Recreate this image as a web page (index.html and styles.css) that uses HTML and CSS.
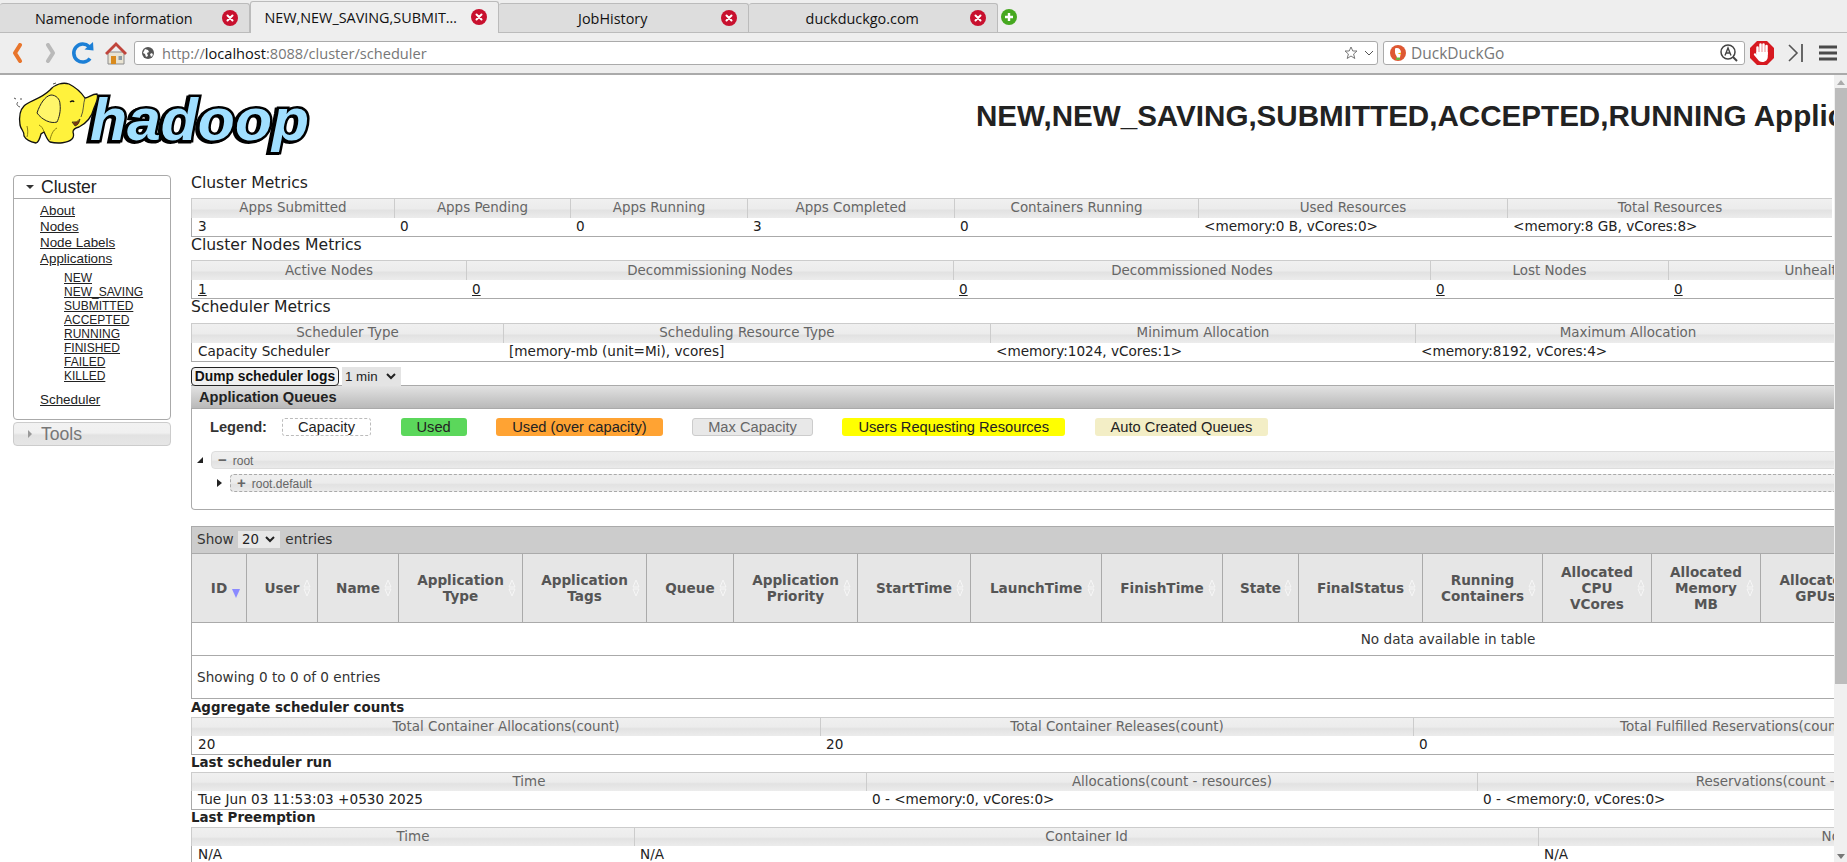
FILE: index.html
```html
<!DOCTYPE html>
<html>
<head>
  <title>NEW,NEW_SAVING,SUBMITTED,ACCEPTED,RUNNING Applications</title>
  <link rel="stylesheet" href="styles.css">
</head>
<body>
  <svg class="defs" width="0" height="0">
    <symbol id="close" viewBox="0 0 16 16">
      <circle cx="8" cy="8" r="8" fill="#c8102e"/>
      <path d="M5.5 5.5l5 5M10.5 5.5l-5 5" stroke="#fff" stroke-width="2" stroke-linecap="round"/>
    </symbol>
  </svg>

  <div class="tabstrip">
    <div class="tab"><span class="tab-label">Namenode information</span><svg class="tab-close"><use href="#close"/></svg></div>
    <div class="tab active"><span class="tab-label">NEW,NEW_SAVING,SUBMIT…</span><svg class="tab-close"><use href="#close"/></svg></div>
    <div class="tab"><span class="tab-label">JobHistory</span><svg class="tab-close"><use href="#close"/></svg></div>
    <div class="tab"><span class="tab-label">duckduckgo.com</span><svg class="tab-close"><use href="#close"/></svg></div>
    <svg class="tab-new" viewBox="0 0 16 16">
      <circle cx="8" cy="8" r="8" fill="#46a820"/>
      <path d="M8 4v8M4 8h8" stroke="#fff" stroke-width="2.4"/>
    </svg>
  </div>

  <div class="toolbar">
    <svg class="tb-back" viewBox="0 0 14 20"><path d="M10 2L5 10l5 8" fill="none" stroke="#e8752c" stroke-width="4" stroke-linejoin="round" stroke-linecap="round"/></svg>
    <svg class="tb-forward" viewBox="0 0 14 20"><path d="M4 2l5 8-5 8" fill="none" stroke="#b9b9b9" stroke-width="4" stroke-linejoin="round" stroke-linecap="round"/></svg>
    <svg class="tb-reload" viewBox="0 0 24 24">
      <path d="M19 17.500A9 9 0 1 1 18 5.500" fill="none" stroke="#1c7fd6" stroke-width="3.600"/>
      <path d="M13.500 8.500L22.500 9.500 22 1z" fill="#1c7fd6"/>
    </svg>
    <svg class="tb-home" viewBox="0 0 24 24">
      <path d="M4 11h16v12H4z" fill="#e9e3d2" stroke="#8c8c8c"/>
      <path d="M1 12L12 1l11 11-2 2-9-9-9 9z" fill="#c0453c"/>
      <path d="M7 15h5v8H7z" fill="#d98a1c"/>
      <path d="M14.500 15H18v4h-3.500z" fill="#8a9aa5"/>
    </svg>
    <div class="urlbar">
      <svg class="globe" viewBox="0 0 12 12">
        <circle cx="6" cy="6" r="6" fill="#555"/>
        <path d="M3 2l3 1 1 2-2 1 1 3-2 1-1-3-2-1zM8 7l2-1 1 2-2 2z" fill="#fff"/>
      </svg>
      <span class="url"><span class="url-dim">http://</span>localhost<span class="url-dim">:8088/cluster/scheduler</span></span>
      <svg class="star" viewBox="0 0 14 14"><path d="M7 1l1.800 4H13L9.600 8l1.200 4.500L7 10l-3.800 2.500L4.400 8 1 5h4.200z" fill="none" stroke="#777"/></svg>
      <svg class="chev" viewBox="0 0 10 6"><path d="M1 1l4 4 4-4" fill="none" stroke="#555"/></svg>
    </div>
    <div class="searchbar">
      <svg class="ddg" viewBox="0 0 16 16">
        <circle cx="8" cy="8" r="8" fill="#de5833"/>
        <path d="M5 3.500c3-1.500 6 .5 6 4 0 2-1 3-1 5.500H7c0-2.500-2-3-2-5.500z" fill="#fff"/>
        <path d="M7.500 8.500l3.500-1v2z" fill="#f5b400"/>
        <path d="M6 12.500h4V15H6z" fill="#6db33f"/>
      </svg>
      <span class="search-text">DuckDuckGo</span>
      <svg class="search-a" viewBox="0 0 18 18">
        <circle cx="8" cy="8" r="7" fill="none" stroke="#444" stroke-width="1.500"/>
        <path d="M5 11.500L8 4l3 7.500M6 9h4" fill="none" stroke="#444" stroke-width="1.400"/>
        <path d="M13 13l4 4" stroke="#444" stroke-width="2"/>
      </svg>
    </div>
    <svg class="tb-abp" viewBox="0 0 24 24">
      <path d="M7 0h10l7 7v10l-7 7H7l-7-7V7z" fill="#d71920"/>
      <path d="M7.500 13V6.500M10.500 12V3.500M13.500 12V3.500M16.500 13V5" fill="none" stroke="#fff" stroke-width="2.500" stroke-linecap="round"/>
      <path d="M6.300 11h11.500v4.500c0 3-2 5.500-5.500 5.500-2.500 0-3.500-1-4.500-2.500L4 14c-.7-1.200.8-2.200 1.600-1.400L7 14z" fill="#fff"/>
    </svg>
    <svg class="tb-next" viewBox="0 0 15 20"><path d="M1 2l8 8-8 8" fill="none" stroke="#555" stroke-width="1.600"/><path d="M14 1v18" stroke="#444" stroke-width="1.600"/></svg>
    <svg class="tb-menu" viewBox="0 0 18 16"><path d="M0 2h18M0 8h18M0 14h18" stroke="#4a4a4a" stroke-width="3"/></svg>
  </div>

  <div class="viewport">
    <div class="page">
      <div class="masthead">
        <svg class="logo" viewBox="0 0 300 75">
          <text class="logo-word" x="77" y="60" textLength="219" lengthAdjust="spacingAndGlyphs">hadoop</text>
          <path d="M37 10C42 4 50 2 56 4C62 7 68 12 72 18C75 18 79 14 84 14C86 18 83 23 81 28C79 36 74 43 66 47C62 48 60 50 60 52C61 55 60 58 59 59C55 63 45 64 37 62C34 60 33 56 31 52L28 54C27 58 26 62 23 63C18 62 13 60 11 56C12 52 8 50 7 45C6 38 7 30 11 26C16 21 28 19 37 10Z" fill="#fff23c" stroke="#111" stroke-width="1.300"/>
          <path d="M24 33C27 24 32 16 38 15C43 15 47 19 47 24C48 31 46 38 44 42C38 44 29 40 24 33Z" fill="#fff66a" stroke="#222" stroke-width="1"/>
          <path d="M7 27C4 26 3 24 5 22M3 19l-2-1M8 20l0-2M40 4l3-1" fill="none" stroke="#555" stroke-width="1"/>
          <path d="M57 22q3-2 4 0" fill="none" stroke="#111" stroke-width="1.400"/>
          <path d="M59 42q5 1 8-3-1 6-5 7z" fill="#7b3b12" stroke="#111" stroke-width=".6"/>
          <path d="M72 18C70 24 71 30 68 37" fill="none" stroke="#333" stroke-width=".8"/>
          <path d="M31 52C30 48 28 46 26 45M44 48C40 50 38 55 37 60M14 46C15 50 15 54 14 57" fill="none" stroke="#8a7f10" stroke-width="1"/>
        </svg>
        <h1 class="title">NEW,NEW_SAVING,SUBMITTED,ACCEPTED,RUNNING Applications</h1>
      </div>

      <div class="main">
        <div class="sidebar">
          <div class="nav-box">
            <div class="nav-head"><span class="tri-down"></span>Cluster</div>
            <ul class="nav-list">
              <li><a href="#">About</a></li>
              <li><a href="#">Nodes</a></li>
              <li><a href="#">Node Labels</a></li>
              <li><a href="#">Applications</a>
                <ul class="nav-sub">
                  <li><a href="#">NEW</a></li>
                  <li><a href="#">NEW_SAVING</a></li>
                  <li><a href="#">SUBMITTED</a></li>
                  <li><a href="#">ACCEPTED</a></li>
                  <li><a href="#">RUNNING</a></li>
                  <li><a href="#">FINISHED</a></li>
                  <li><a href="#">FAILED</a></li>
                  <li><a href="#">KILLED</a></li>
                </ul>
              </li>
              <li><a href="#">Scheduler</a></li>
            </ul>
          </div>
          <div class="nav-closed"><span class="tri-right"></span>Tools</div>
        </div>

        <div class="content">
          <div class="metrics-title">Cluster Metrics</div>
          <table class="info" width="1641">
            <colgroup><col width="203"><col width="176"><col width="177"><col width="207"><col width="244"><col width="309"><col width="325"></colgroup>
            <tr><th>Apps Submitted</th><th>Apps Pending</th><th>Apps Running</th><th>Apps Completed</th><th>Containers Running</th><th>Used Resources</th><th>Total Resources</th></tr>
            <tr><td>3</td><td>0</td><td>0</td><td>3</td><td>0</td><td>&lt;memory:0 B, vCores:0&gt;</td><td>&lt;memory:8 GB, vCores:8&gt;</td></tr>
          </table>

          <div class="metrics-title">Cluster Nodes Metrics</div>
          <table class="info" width="1824">
            <colgroup><col width="275"><col width="487"><col width="477"><col width="238"><col width="347"></colgroup>
            <tr><th>Active Nodes</th><th>Decommissioning Nodes</th><th>Decommissioned Nodes</th><th>Lost Nodes</th><th>Unhealthy Nodes</th></tr>
            <tr><td><a href="#">1</a></td><td><a href="#">0</a></td><td><a href="#">0</a></td><td><a href="#">0</a></td><td><a href="#">0</a></td></tr>
          </table>

          <div class="metrics-title">Scheduler Metrics</div>
          <table class="info" width="1649">
            <colgroup><col width="312"><col width="487"><col width="425"><col width="425"></colgroup>
            <tr><th>Scheduler Type</th><th>Scheduling Resource Type</th><th>Minimum Allocation</th><th>Maximum Allocation</th></tr>
            <tr><td>Capacity Scheduler</td><td>[memory-mb (unit=Mi), vcores]</td><td>&lt;memory:1024, vCores:1&gt;</td><td>&lt;memory:8192, vCores:4&gt;</td></tr>
          </table>

          <div class="log-row">
            <button class="log-btn">Dump scheduler logs</button>
            <select class="log-select"><option>1 min</option></select>
          </div>

          <div class="panel">
            <div class="panel-head">Application Queues</div>
            <div class="legend">
              <b class="legend-label">Legend:</b>
              <span class="chip chip-capacity">Capacity</span>
              <span class="chip chip-used">Used</span>
              <span class="chip chip-over">Used (over capacity)</span>
              <span class="chip chip-max">Max Capacity</span>
              <span class="chip chip-users">Users Requesting Resources</span>
              <span class="chip chip-auto">Auto Created Queues</span>
            </div>
            <div class="queue queue-root">
              <span class="q-open"></span>
              <div class="q-bar"><span class="q-sign">&minus;</span>root</div>
            </div>
            <div class="queue queue-child">
              <span class="q-closed"></span>
              <div class="q-bar q-dashed"><span class="q-sign">+</span>root.default</div>
            </div>
          </div>

          <div class="apps">
            <div class="apps-bar">Show <select class="apps-select"><option>20</option></select> entries</div>
            <table class="apps-table" width="2512">
              <colgroup><col width="55"><col width="71"><col width="81"><col width="124"><col width="124"><col width="87"><col width="124"><col width="113"><col width="131"><col width="121"><col width="76"><col width="124"><col width="120"><col width="109"><col width="109"><col width="110"><col width="104"><col width="104"><col width="104"><col width="104"><col width="104"><col width="104"><col width="105"><col width="105"></colgroup>
              <tr>
                <th class="sort-desc">ID</th><th>User</th><th>Name</th><th>Application Type</th><th>Application Tags</th><th>Queue</th><th>Application Priority</th><th>StartTime</th><th>LaunchTime</th><th>FinishTime</th><th>State</th><th>FinalStatus</th><th>Running Containers</th><th>Allocated CPU VCores</th><th>Allocated Memory MB</th><th>Allocated GPUs</th><th>Reserved CPU VCores</th><th>Reserved Memory MB</th><th>Reserved GPUs</th><th>% of Queue</th><th>% of Cluster</th><th>Progress</th><th>Tracking UI</th><th>Blacklisted Nodes</th>
              </tr>
              <tr><td class="empty" colspan="24">No data available in table</td></tr>
            </table>
            <div class="apps-foot">Showing 0 to 0 of 0 entries</div>
          </div>

          <div class="sub-title sub-first">Aggregate scheduler counts</div>
          <table class="info info-low" width="1862">
            <colgroup><col width="629"><col width="593"><col width="640"></colgroup>
            <tr><th>Total Container Allocations(count)</th><th>Total Container Releases(count)</th><th>Total Fulfilled Reservations(count)</th></tr>
            <tr><td>20</td><td>20</td><td>0</td></tr>
          </table>

          <div class="sub-title">Last scheduler run</div>
          <table class="info info-low" width="1936">
            <colgroup><col width="675"><col width="611"><col width="650"></colgroup>
            <tr><th>Time</th><th>Allocations(count - resources)</th><th>Reservations(count - resources)</th></tr>
            <tr><td>Tue Jun 03 11:53:03 +0530 2025</td><td>0 - &lt;memory:0, vCores:0&gt;</td><td>0 - &lt;memory:0, vCores:0&gt;</td></tr>
          </table>

          <div class="sub-title">Last Preemption</div>
          <table class="info info-low" width="1965">
            <colgroup><col width="443"><col width="904"><col width="618"></colgroup>
            <tr><th>Time</th><th>Container Id</th><th>Node Id</th></tr>
            <tr><td>N/A</td><td>N/A</td><td>N/A</td></tr>
          </table>
        </div>
      </div>
    </div>

    <div class="scrollbar">
      <span class="sb-up"></span>
      <div class="sb-thumb"></div>
      <span class="sb-down"></span>
    </div>
  </div>
</body>
</html>
```

FILE: styles.css
```css
* {
  box-sizing: border-box;
}

html, body {
  height: 100%;
}

body {
  margin: 0;
  display: flex;
  flex-direction: column;
  overflow: hidden;
  background-color: #fff;
  color: #222;
  font-family: "DejaVu Sans", sans-serif;
  font-size: 13.6px;
}

a {
  color: #222;
}

.defs {
  position: absolute;
}

/* browser chrome */
.tabstrip {
  display: flex;
  align-items: flex-end;
  height: 33px;
  flex: none;
  background-color: #eee;
  border-bottom: 1px solid #bbb;
  font-family: "Open Sans", sans-serif;
  font-size: 14.4px;
  color: #111;
}

.tab {
  display: flex;
  align-items: center;
  width: 249.500px;
  height: 29px;
  background-color: #ddd;
  border: 1px solid #bbb;
  border-bottom: none;
  border-left: none;
  border-radius: 3px 3px 0 0;
}

.tab.active {
  height: 32px;
  margin-bottom: -1px;
  padding-bottom: 1px;
  background-color: #eee;
  border-left: 1px solid #bbb;
}

.tab.active .tab-label {
  padding-left: 4px;
}

.tab-label {
  flex: 1;
  min-width: 0;
  padding-left: 10px;
  text-align: center;
  white-space: nowrap;
  overflow: hidden;
}

.tab-close {
  flex: none;
  width: 16px;
  height: 16px;
  margin: 0 11px 0 4px;
}

.tab-new {
  width: 16px;
  height: 16px;
  margin: 0 0 7px 3px;
}

.toolbar {
  display: flex;
  align-items: center;
  height: 42px;
  flex: none;
  padding: 0 10px 1px;
  background-color: #eee;
  border-bottom: 2px solid #aaa;
}

.tb-back, .tb-forward {
  width: 14px;
  height: 20px;
}

.tb-forward {
  margin-left: 20px;
}

.tb-reload, .tb-home {
  width: 24px;
  height: 24px;
}

.tb-reload {
  margin-left: 13px;
}

.tb-home {
  margin-left: 9px;
}

.urlbar, .searchbar {
  display: flex;
  align-items: center;
  height: 24px;
  background-color: #fff;
  border: 1px solid #aaa;
  border-radius: 3px;
  font-family: "Open Sans", sans-serif;
}

.urlbar {
  flex: 1;
  min-width: 0;
  margin-left: 6px;
  padding: 0 3px 0 7px;
  color: #111;
  font-size: 14.6px;
}

.globe {
  width: 12px;
  height: 12px;
  margin-right: 8px;
}

.url {
  flex: 1;
}

.url-dim {
  color: #777;
}

.star {
  width: 14px;
  height: 14px;
  margin-right: 6px;
}

.chev {
  width: 10px;
  height: 6px;
}

.searchbar {
  flex: none;
  width: 362px;
  margin-left: 5px;
  padding: 0 6px;
  color: #777;
  font-size: 15.5px;
}

.ddg {
  width: 16px;
  height: 16px;
  margin-right: 5px;
}

.search-text {
  flex: 1;
}

.search-a {
  width: 18px;
  height: 18px;
}

.tb-abp {
  width: 24px;
  height: 24px;
  margin-left: 5px;
}

.tb-next {
  width: 15px;
  height: 20px;
  margin-left: 14px;
}

.tb-menu {
  width: 18px;
  height: 16px;
  margin-left: 16px;
}

/* page */
.viewport {
  display: flex;
  flex: 1;
  min-height: 0;
}

.page {
  flex: 1;
  min-width: 0;
  overflow: hidden;
}

.masthead {
  display: flex;
  height: 99.700px;
  padding: 5px 0 0 13px;
}

.logo {
  flex: none;
  width: 300px;
  height: 75px;
}

.logo-word {
  font-family: "Liberation Sans", sans-serif;
  font-size: 60px;
  font-weight: bold;
  font-style: italic;
  fill: #a0dfff;
  stroke: #000;
  stroke-width: 5px;
  stroke-linejoin: miter;
  paint-order: stroke;
  filter: drop-shadow(-2px 1px 0 #000);
}

.title {
  flex: none;
  margin: 19px 0 0 663px;
  color: #222;
  font-family: "Liberation Sans", sans-serif;
  font-size: 29.6px;
  font-weight: bold;
  line-height: 34px;
  white-space: nowrap;
}

.main {
  display: flex;
}

.sidebar {
  flex: none;
  width: 158px;
  margin: 0 20px 0 13px;
  font-family: "Liberation Sans", sans-serif;
}

.nav-box {
  height: 245px;
  border: 1px solid #aaa;
  border-radius: 4px;
}

.nav-head, .nav-closed {
  display: flex;
  align-items: center;
  height: 23px;
  padding: 1px 0 0 12px;
  font-size: 17.6px;
}

.nav-head {
  border-bottom: 1px solid #aaa;
}

.tri-down {
  width: 0;
  height: 0;
  margin-right: 7px;
  border-top: 4px solid #333;
  border-left: 4px solid transparent;
  border-right: 4px solid transparent;
}

.tri-right {
  width: 0;
  height: 0;
  margin-right: 9px;
  margin-left: 2px;
  border-left: 4px solid #999;
  border-top: 4px solid transparent;
  border-bottom: 4px solid transparent;
}

.nav-closed {
  height: 24px;
  margin-top: 2px;
  border: 1px solid #ccc;
  border-radius: 4px;
  background: linear-gradient(#f2f2f2, #f0f0f0 45%, #e2e2e2 55%, #e6e6e6);
  color: #777;
}

.nav-list {
  margin: 4px 0 0;
  padding: 0 0 0 26px;
  list-style: none;
  font-size: 13.400px;
  line-height: 16px;
}

.nav-sub {
  margin: 4px 0 9px;
  padding: 0 0 0 24px;
  list-style: none;
  font-size: 12px;
  line-height: 14px;
}

.content {
  flex: 1;
  min-width: 0;
  overflow: hidden;
}

.metrics-title {
  height: 23.300px;
  font-size: 15.600px;
  line-height: 17px;
}

.info {
  border-collapse: separate;
  border-spacing: 0;
  table-layout: fixed;
}

.info th {
  height: 20px;
  padding: 0;
  background: linear-gradient(#f0f0f0, #ececec 50%, #e2e2e2 60%, #ececec);
  border-top: 1px solid #ccc;
  border-left: 1px solid #ccc;
  color: #666;
  font-size: 13.450px;
  font-weight: normal;
  line-height: 16px;
  white-space: nowrap;
}

.info td {
  height: 19px;
  padding: 0 0 0 6px;
  border-bottom: 1px solid #aaa;
  line-height: 15px;
  white-space: nowrap;
}

.info td:first-child {
  padding-left: 6px;
  border-left: 1px solid #aaa;
}

.log-row {
  display: flex;
  align-items: stretch;
  height: 19px;
  margin-top: 5px;
}

.log-btn {
  width: 148px;
  padding: 0;
  background-color: #f1f1f1;
  border: 1px solid #222;
  border-radius: 4px;
  color: #111;
  font-family: "Liberation Sans", sans-serif;
  font-size: 13.800px;
  font-weight: bold;
}

.log-select, .apps-select {
  appearance: none;
  border: none;
  border-radius: 0;
  background: #e4e4e4 url("data:image/svg+xml,%3Csvg xmlns='http://www.w3.org/2000/svg' width='10' height='7'%3E%3Cpath d='M1 1l4 4 4-4' fill='none' stroke='%23222' stroke-width='2'/%3E%3C/svg%3E") no-repeat right 5px center;
  color: #222;
}

.log-select {
  width: 59px;
  margin-left: 3px;
  padding: 0 0 0 3px;
  font-family: "Liberation Sans", sans-serif;
  font-size: 13.330px;
}

.panel {
  width: 1700px;
  height: 125px;
  margin-top: -1px;
  border: 1px solid #aaa;
  border-top: none;
  border-radius: 0 0 0 4px;
  font-family: "Liberation Sans", sans-serif;
}

.panel-head {
  height: 24px;
  margin-left: -1px;
  padding-left: 8px;
  background: linear-gradient(#e2e2e2, #b9b9b9);
  border-top: 1px solid #aaa;
  border-bottom: 1px solid #aaa;
  font-size: 14.670px;
  font-weight: bold;
  line-height: 22px;
}

.legend {
  display: flex;
  align-items: center;
  gap: 29.500px;
  height: 18px;
  margin: 9px 0 0 18px;
  font-size: 14.670px;
}

.legend-label {
  margin-right: -14.500px;
  color: #333;
}

.chip {
  height: 18px;
  padding: 0 15px;
  border: 1px solid transparent;
  border-radius: 3px;
  line-height: 16px;
  white-space: nowrap;
}

.chip-capacity {
  border: 1px dashed #bbb;
}

.chip-used {
  background-color: #5bd75b;
}

.chip-over {
  background-color: #ffa333;
}

.chip-max {
  background-color: #e8e8e8;
  border-color: #ccc;
  color: #666;
}

.chip-users {
  background-color: #ff0;
}

.chip-auto {
  background-color: #f3eec6;
}

.queue {
  display: flex;
  align-items: center;
  font-size: 12px;
  color: #666;
}

.queue-root {
  margin: 15px 0 0 5px;
}

.queue-child {
  margin: 5px 0 0 25px;
}

.q-open {
  width: 0;
  height: 0;
  margin-right: 8px;
  border-bottom: 6px solid #222;
  border-left: 6px solid transparent;
}

.q-closed {
  width: 0;
  height: 0;
  margin-right: 8px;
  border-left: 5px solid #222;
  border-top: 4px solid transparent;
  border-bottom: 4px solid transparent;
}

.q-bar {
  flex: 1;
  height: 18px;
  padding-left: 6px;
  background: linear-gradient(#efefef, #ececec 50%, #e2e2e2 60%, #eaeaea);
  border: 1px solid #ddd;
  border-radius: 4px;
  line-height: 15px;
}

.q-dashed {
  border: 1px dashed #aaa;
}

.q-sign {
  margin-right: 6px;
  font-size: 15px;
  font-weight: bold;
}

.apps {
  width: 1700px;
  margin-top: 16px;
}

.apps-bar {
  height: 28px;
  padding: 3px 0 0 5px;
  background-color: #ccc;
  border: 1px solid #aaa;
  border-bottom: 1px solid #aaa;
  line-height: 18px;
  color: #333;
}

.apps-select {
  width: 42px;
  height: 17px;
  margin: 1px 1px 0 0;
  padding-left: 4px;
  background-color: #e8e8e8;
  font-family: "DejaVu Sans", sans-serif;
  font-size: 13.330px;
  vertical-align: top;
}

.apps-table {
  border-collapse: separate;
  border-spacing: 0;
  table-layout: fixed;
}

.apps-table th {
  height: 69px;
  padding: 0 14px;
  background: #e6e6e6 url("data:image/svg+xml,%3Csvg xmlns='http://www.w3.org/2000/svg' width='8' height='18'%3E%3Cpath d='M4 1L7 8H1zM4 17L1 10h6z' fill='none' stroke='%23f6f6f6'/%3E%3C/svg%3E") no-repeat right 6px center;
  border-left: 1px solid #aaa;
  border-bottom: 1px solid #aaa;
  color: #555;
  font-weight: bold;
  line-height: 16px;
}

.apps-table th.sort-desc {
  background-image: url("data:image/svg+xml,%3Csvg xmlns='http://www.w3.org/2000/svg' width='8' height='20'%3E%3Cpath d='M0 11h8l-4 9z' fill='%238a8aff'/%3E%3C/svg%3E");
}

.empty {
  height: 33px;
  padding: 1px 0 0;
  border-left: 1px solid #aaa;
  border-bottom: 1px solid #aaa;
  text-align: center;
  color: #333;
}

.apps-foot {
  height: 43px;
  padding-left: 5px;
  border-left: 1px solid #aaa;
  border-bottom: 1px solid #aaa;
  line-height: 42px;
  color: #333;
}

.sub-title {
  height: 17px;
  font-size: 13.400px;
  font-weight: bold;
  line-height: 15px;
  white-space: nowrap;
}

.sub-first {
  height: 18px;
  padding-top: 1px;
}

.info-low th {
  height: 19px;
}

/* scrollbar */
.scrollbar {
  display: flex;
  flex-direction: column;
  align-items: center;
  flex: none;
  width: 13px;
  background-color: #f0f0f0;
}

.sb-up, .sb-down {
  width: 0;
  height: 0;
  border-left: 4px solid transparent;
  border-right: 4px solid transparent;
}

.sb-up {
  margin: 5px 0 3px;
  border-bottom: 5px solid #aaa;
}

.sb-thumb {
  width: 12px;
  height: 596px;
  margin-left: 1px;
  background-color: #bcbcbc;
}

.sb-down {
  margin-top: auto;
  margin-bottom: 3px;
  border-top: 5px solid #777;
}
```
